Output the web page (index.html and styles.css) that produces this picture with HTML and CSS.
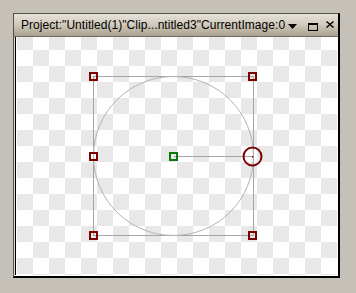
FILE: index.html
```html
<!DOCTYPE html>
<html lang="en">
<head>
  <meta charset="UTF-8">
  <title>Project window</title>
  <link rel="stylesheet" href="styles.css">
</head>
<body>
  <div class="window">
    <div class="titlebar">
      <span class="title">Project:"Untitled(1)"Clip...ntitled3"CurrentImage:0</span>
      <div class="buttons">
        <svg class="btn-menu" width="9" height="5" viewBox="0 0 9 5"><path d="M0 0H9L4.5 5Z" fill="#000"/></svg>
        <svg class="btn-max" width="10" height="8" viewBox="0 0 10 8"><rect x="0.5" y="1" width="9" height="6.5" fill="none" stroke="#000"/><rect x="0" y="0" width="10" height="2" fill="#000"/></svg>
        <svg class="btn-close" width="8" height="7" viewBox="0 0 8 7"><path d="M0.5 0.5L7.5 6.5M7.5 0.5L0.5 6.5" stroke="#000" stroke-width="1.4"/></svg>
      </div>
    </div>
    <div class="viewport">
      <div class="canvas-frame">
        <div class="canvas">
          <svg width="320" height="238" viewBox="17 37 320 238">
            <!-- bounding box and circle -->
            <rect x="93.5" y="76.5" width="160" height="159" fill="none" stroke="#a6a6a6"/>
            <ellipse cx="173.5" cy="156" rx="80" ry="79.5" fill="none" stroke="#b4b4b4"/>
            <line x1="174" y1="156.5" x2="252" y2="156.5" stroke="#a6a6a6"/>
            <!-- handles -->
            <g fill="none" stroke="#7b0000" stroke-width="2">
              <rect x="90" y="73" width="7" height="7"/>
              <rect x="249" y="73" width="7" height="7"/>
              <rect x="90" y="153" width="7" height="7"/>
              <rect x="90" y="232" width="7" height="7"/>
              <rect x="249" y="232" width="7" height="7"/>
              <circle cx="252.5" cy="156.5" r="9"/>
            </g>
            <rect x="252" y="156" width="1.5" height="1.5" fill="#7b0000"/>
            <rect x="170" y="153" width="7" height="7" fill="none" stroke="#0a7a0a" stroke-width="2"/>
          </svg>
        </div>
      </div>
    </div>
  </div>
</body>
</html>
```

FILE: styles.css
```css
body {
  margin: 0;
  padding: 13px 0 0 13px;
  background-color: #c5c1b9;
  font-family: "Liberation Sans", Arial, sans-serif;
}

.window {
  width: 327px;
  box-sizing: border-box;
  border-top: 1px solid #55534e;
  border-left: 1px solid #55534e;
  border-right: 2px solid #000;
  border-bottom: 2px solid #000;
  background: #fff;
}

.titlebar {
  height: 22px;
  display: flex;
  align-items: center;
  padding-left: 7px;
  border-bottom: 1px solid #6f6b62;
  background: linear-gradient(to bottom, #e6e2da, #d2ccc0 45%, #aaa18c);
}

.title {
  font-size: 12px;
  letter-spacing: 0.05px;
  color: #000;
  white-space: nowrap;
}

.buttons {
  display: flex;
  align-items: center;
  margin-left: auto;
  margin-right: 4px;
}

.buttons svg {
  display: block;
}

.btn-menu {
  margin-top: 3px;
}

.btn-max {
  margin-left: 11px;
  margin-top: 3px;
}

.btn-close {
  margin-left: 8px;
  margin-top: -2px;
}

.viewport {
  border-left: 1px solid #dcd8cf;
  padding: 0 1px 1px 0;
  background: #fff;
}

.canvas-frame {
  border-left: 1px solid #000;
  padding-left: 1px;
  background: #fff;
}

.canvas {
  width: 320px;
  height: 238px;
  background-color: #fff;
  background-image: conic-gradient(#fff 25%, #e8e8e8 0 50%, #fff 0 75%, #e8e8e8 0);
  background-size: 32px 32px;
  background-position: 0 -3px;
}

.canvas svg {
  display: block;
}
```
